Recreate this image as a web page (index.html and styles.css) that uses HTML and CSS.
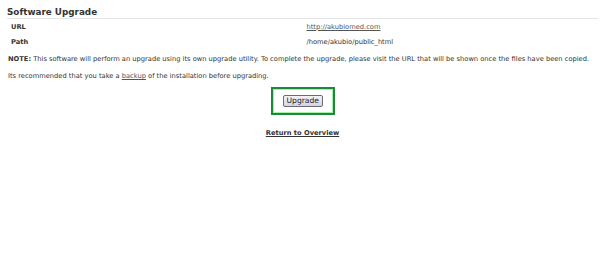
FILE: index.html
```html
<!DOCTYPE html>
<html lang="en">

<head>
    <meta charset="UTF-8">
    <title>Software Upgrade</title>
    <link rel="stylesheet" href="styles.css">
</head>

<body>
    <div class="page">
        <h2 class="section-title">Software Upgrade</h2>

        <table class="details">
            <tr>
                <th>URL</th>
                <td><a href="#">http://akubiomed.com</a></td>
            </tr>
            <tr>
                <th>Path</th>
                <td>/home/akubio/public_html</td>
            </tr>
        </table>

        <p class="note"><strong>NOTE:</strong> This software will perform an upgrade using its own upgrade utility. To complete the upgrade, please visit the URL that will be shown once the files have been copied.</p>
        <p class="note second">Its recommended that you take a <a href="#">backup</a> of the installation before upgrading.</p>

        <div class="actions">
            <div class="highlight">
                <button type="button" class="btn">Upgrade</button>
            </div>
        </div>

        <div class="return-link">
            <a href="#">Return to Overview</a>
        </div>
    </div>
</body>

</html>
```

FILE: styles.css
```css
body {
    margin: 0;
    background-color: #ffffff;
    font-family: "DejaVu Sans", Verdana, sans-serif;
    font-size: 6.7px;
    line-height: 8px;
    color: #333333;
}

.page {
    padding: 7px 2px 0 7px;
}

.section-title {
    margin: 0;
    font-size: 8.8px;
    line-height: 11px;
    font-weight: bold;
    color: #333333;
    border-bottom: 1px solid #e2e6e8;
}

.details {
    width: 100%;
    border-collapse: collapse;
}

.details th,
.details td {
    text-align: left;
    padding: 3.5px 4px;
}

.details th {
    width: 50%;
    font-weight: bold;
    color: #333333;
}

.details a,
.note a {
    color: #555555;
}

.note {
    margin: 6px 0 0 1px;
    white-space: nowrap;
}

.note.second {
    margin-top: 9px;
}

.actions {
    display: flex;
    justify-content: center;
    margin-top: 7px;
}

.highlight {
    border: 2px solid #1a8a3a;
    box-shadow: inset 0 0 0 1px #a8f0a8;
    padding: 6px 10px;
}

.btn {
    display: block;
    font-family: "DejaVu Sans", Verdana, sans-serif;
    font-size: 7.6px;
    line-height: 10px;
    color: #1a1a2a;
    background: linear-gradient(#f4f4f8, #d4d4de);
    border: 1px solid #6a6a7a;
    border-radius: 2px;
    padding: 0 3px;
    width: 40px;
    height: 12px;
}

.return-link {
    text-align: center;
    margin-top: 14px;
}

.return-link a {
    font-weight: bold;
    color: #333333;
}
```
